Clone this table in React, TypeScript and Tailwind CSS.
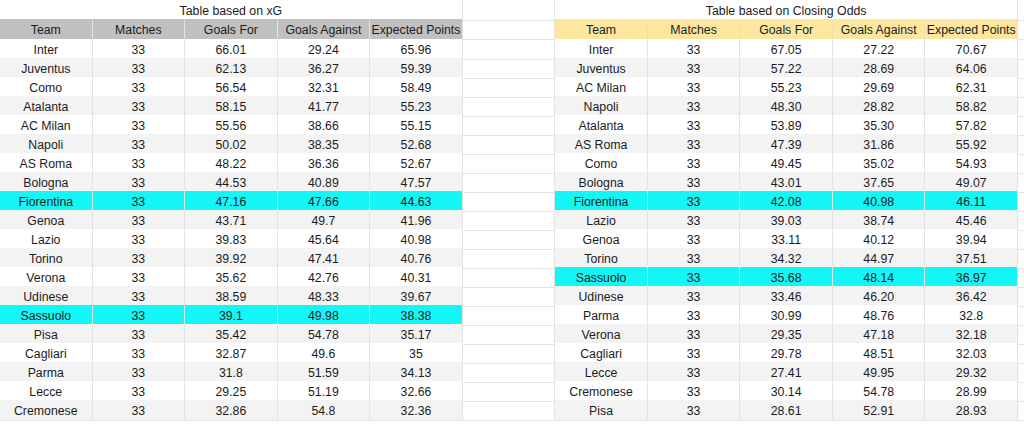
import React from "react";

type Row = [string, string, string, string, string];

const left: Row[] = [
  ["Inter", "33", "66.01", "29.24", "65.96"],
  ["Juventus", "33", "62.13", "36.27", "59.39"],
  ["Como", "33", "56.54", "32.31", "58.49"],
  ["Atalanta", "33", "58.15", "41.77", "55.23"],
  ["AC Milan", "33", "55.56", "38.66", "55.15"],
  ["Napoli", "33", "50.02", "38.35", "52.68"],
  ["AS Roma", "33", "48.22", "36.36", "52.67"],
  ["Bologna", "33", "44.53", "40.89", "47.57"],
  ["Fiorentina", "33", "47.16", "47.66", "44.63"],
  ["Genoa", "33", "43.71", "49.7", "41.96"],
  ["Lazio", "33", "39.83", "45.64", "40.98"],
  ["Torino", "33", "39.92", "47.41", "40.76"],
  ["Verona", "33", "35.62", "42.76", "40.31"],
  ["Udinese", "33", "38.59", "48.33", "39.67"],
  ["Sassuolo", "33", "39.1", "49.98", "38.38"],
  ["Pisa", "33", "35.42", "54.78", "35.17"],
  ["Cagliari", "33", "32.87", "49.6", "35"],
  ["Parma", "33", "31.8", "51.59", "34.13"],
  ["Lecce", "33", "29.25", "51.19", "32.66"],
  ["Cremonese", "33", "32.86", "54.8", "32.36"],
];

const right: Row[] = [
  ["Inter", "33", "67.05", "27.22", "70.67"],
  ["Juventus", "33", "57.22", "28.69", "64.06"],
  ["AC Milan", "33", "55.23", "29.69", "62.31"],
  ["Napoli", "33", "48.30", "28.82", "58.82"],
  ["Atalanta", "33", "53.89", "35.30", "57.82"],
  ["AS Roma", "33", "47.39", "31.86", "55.92"],
  ["Como", "33", "49.45", "35.02", "54.93"],
  ["Bologna", "33", "43.01", "37.65", "49.07"],
  ["Fiorentina", "33", "42.08", "40.98", "46.11"],
  ["Lazio", "33", "39.03", "38.74", "45.46"],
  ["Genoa", "33", "33.11", "40.12", "39.94"],
  ["Torino", "33", "34.32", "44.97", "37.51"],
  ["Sassuolo", "33", "35.68", "48.14", "36.97"],
  ["Udinese", "33", "33.46", "46.20", "36.42"],
  ["Parma", "33", "30.99", "48.76", "32.8"],
  ["Verona", "33", "29.35", "47.18", "32.18"],
  ["Cagliari", "33", "29.78", "48.51", "32.03"],
  ["Lecce", "33", "27.41", "49.95", "29.32"],
  ["Cremonese", "33", "30.14", "54.78", "28.99"],
  ["Pisa", "33", "28.61", "52.91", "28.93"],
];

const headers = ["Team", "Matches", "Goals For", "Goals Against", "Expected Points"];
const cyanTeams = ["Fiorentina", "Sassuolo"];

const gridCols = "grid grid-cols-[repeat(11,92.55px)_1fr]";
const cell = "flex items-center justify-center pt-[2px] border-r border-b border-[#e3e3e3] whitespace-nowrap";

function rowBg(team: string, i: number) {
  if (cyanTeams.includes(team)) return "bg-[#14f5f5]";
  return i % 2 === 1 ? "bg-[#f3f3f3]" : "bg-white";
}

export default function App() {
  return (
    <div
      className="w-[1024px] h-[426px] bg-white text-[#1c1c1c] text-[12.3px] overflow-hidden"
      style={{ fontFamily: '"Liberation Sans", Arial, sans-serif' }}
    >
      {/* title row */}
      <div className={`${gridCols} h-[19px]`}>
        <div className={`${cell} col-span-5`}>Table based on xG</div>
        <div className={cell}></div>
        <div className={`${cell} col-span-5`}>Table based on Closing Odds</div>
        <div className="border-b border-[#e3e3e3]"></div>
      </div>
      {/* header row */}
      <div className={`${gridCols} h-[20px]`}>
        {headers.map((h) => (
          <div key={"l" + h} className={`${cell} bg-[#c0c0c0] border-[#d4d4d4]`}>
            {h}
          </div>
        ))}
        <div className={cell}></div>
        {headers.map((h) => (
          <div key={"r" + h} className={`${cell} bg-[#fde6a0] border-[#efe0b2]`}>
            {h}
          </div>
        ))}
        <div className="border-b border-[#e3e3e3]"></div>
      </div>
      {left.map((lr, i) => {
        const rr = right[i];
        return (
          <div key={i} className={`${gridCols} h-[19px]`}>
            {lr.map((v, j) => (
              <div key={"l" + j} className={`${cell} ${rowBg(lr[0], i)}`}>
                {v}
              </div>
            ))}
            <div className={cell}></div>
            {rr.map((v, j) => (
              <div key={"r" + j} className={`${cell} ${rowBg(rr[0], i)}`}>
                {v}
              </div>
            ))}
            <div className="border-b border-[#e3e3e3]"></div>
          </div>
        );
      })}
    </div>
  );
}
